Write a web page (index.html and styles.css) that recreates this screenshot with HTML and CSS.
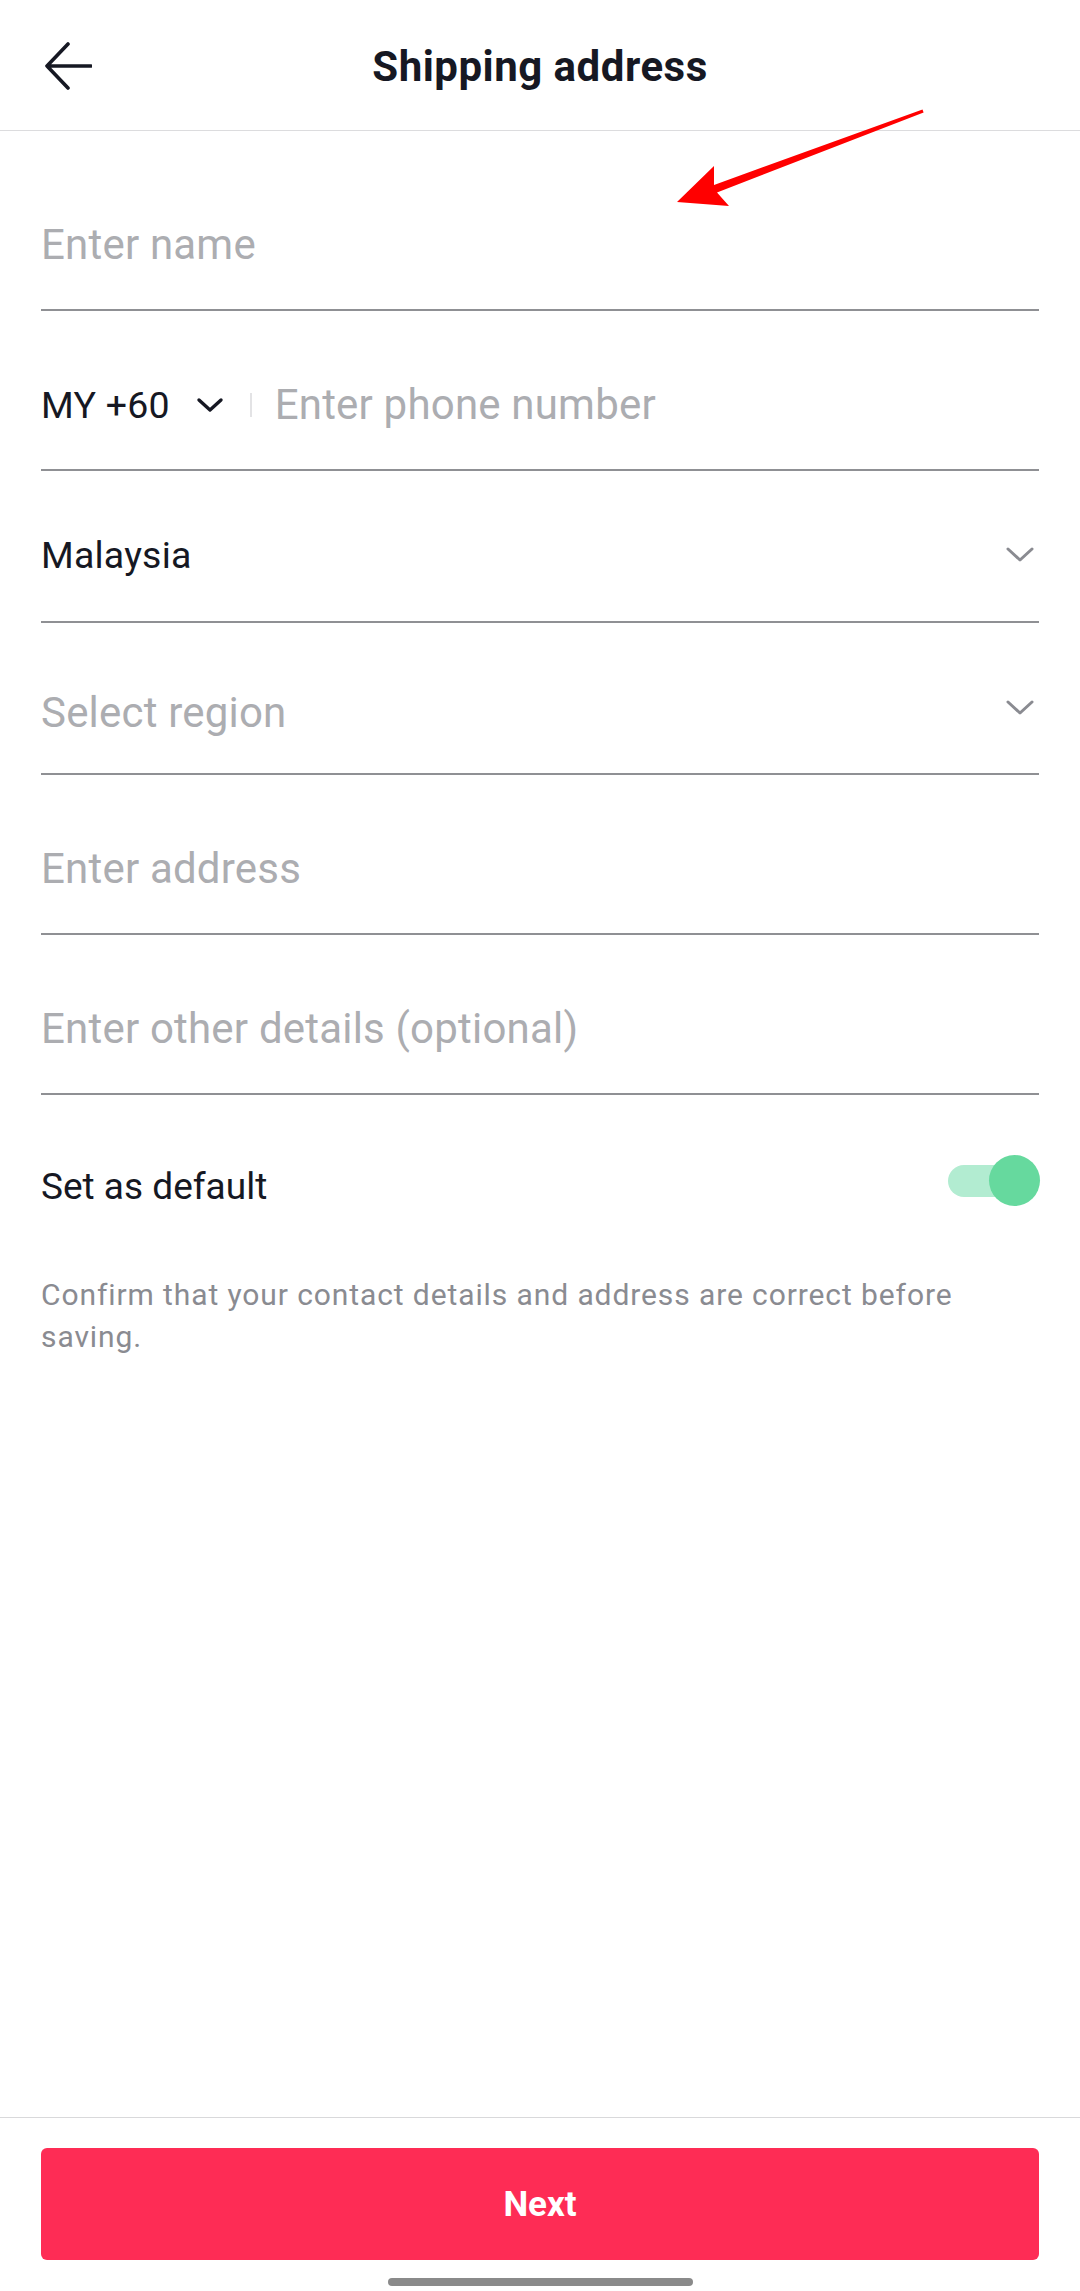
FILE: index.html
```html
<!DOCTYPE html>
<html>
  <head>
    <title>Shipping address</title>
    <meta charset="UTF-8" />
    <link rel="stylesheet" href="styles.css">
  </head>

  <body>
    <div class="page">
      <div class="topBar">
        <button class="back" aria-label="Back">
          <svg width="48" height="48" viewBox="0 0 48 48">
            <path d="M24 2 L3 24 L24 46 M3 24 H47" fill="none" stroke="#161823" stroke-width="3.6" stroke-linecap="round" stroke-linejoin="round"/>
          </svg>
        </button>
        <h1 class="title">Shipping address</h1>
      </div>

      <div class="form">
        <div class="field">
          <p class="placeholder">Enter name</p>
        </div>

        <div class="field">
          <div class="phone">
            <span class="value">MY +60</span>
            <svg class="codeArrow" width="28" height="16" viewBox="0 0 28 16">
              <path d="M3 3 L14 13 L25 3" fill="none" stroke="#161823" stroke-width="3.4" stroke-linecap="round" stroke-linejoin="round"/>
            </svg>
            <span class="divider"></span>
            <span class="placeholder">Enter phone number</span>
          </div>
        </div>

        <div class="field select">
          <span class="value">Malaysia</span>
          <svg class="chevron" width="30" height="18" viewBox="0 0 30 18">
            <path d="M3 3 L15 14 L27 3" fill="none" stroke="#8a8b91" stroke-width="3" stroke-linecap="round" stroke-linejoin="round"/>
          </svg>
        </div>

        <div class="field select region">
          <span class="placeholder">Select region</span>
          <svg class="chevron" width="30" height="18" viewBox="0 0 30 18">
            <path d="M3 3 L15 14 L27 3" fill="none" stroke="#8a8b91" stroke-width="3" stroke-linecap="round" stroke-linejoin="round"/>
          </svg>
        </div>

        <div class="field">
          <p class="placeholder">Enter address</p>
        </div>

        <div class="field">
          <p class="placeholder">Enter other details (optional)</p>
        </div>

        <div class="defaultRow">
          <span class="value">Set as default</span>
          <div class="toggle on">
            <span class="track"></span>
            <span class="knob"></span>
          </div>
        </div>

        <p class="note">Confirm that your contact details and address are correct before saving.</p>
      </div>

      <div class="footer">
        <button class="next">Next</button>
        <div class="homeBar"></div>
      </div>

      <!-- annotation arrow drawn on top of the screenshot -->
      <svg class="pointer" width="1080" height="260" viewBox="0 0 1080 260">
        <polygon points="922.5,109.4 923.6,112.6 717,192.5 729,206 677,202 714,166 714,185" fill="#ff0000"/>
      </svg>
    </div>
  </body>
</html>
```

FILE: styles.css
```css
html * {
  margin: 0;
  padding: 0;
}

body {
  font-family: Roboto, "Liberation Sans", sans-serif;
  background: #fff;
  color: #161823;
}

button {
  background: none;
  border: none;
  outline: none;
  font-family: inherit;
}

.page {
  position: relative;
  width: 1080px;
  height: 2291px;
  display: flex;
  flex-direction: column;
  overflow: hidden;
}

.topBar {
  height: 130px;
  border-bottom: 1px solid #dcdcde;
  display: flex;
  align-items: center;
  justify-content: center;
  position: relative;
}

.back {
  position: absolute;
  left: 44px;
  top: 42px;
  width: 48px;
  height: 48px;
}

.title {
  font-size: 42px;
  font-weight: 700;
  letter-spacing: 0.5px;
  margin-top: 2px;
}

.form {
  flex: 1;
  padding: 20px 41px 0;
}

.field {
  height: 160px;
  border-bottom: 2px solid #8f9094;
  box-sizing: border-box;
  padding-top: 72px;
  font-size: 42px;
  letter-spacing: 0.2px;
  line-height: 44px;
}

.field.select {
  height: 152px;
  padding-top: 62px;
  display: flex;
  align-items: flex-start;
  justify-content: space-between;
}

.field.region {
  padding-top: 68px;
}

.field.region .chevron {
  margin-top: 8px;
}

.placeholder {
  color: #acadb1;
}

.value {
  color: #161823;
  font-size: 37.5px;
}

.phone {
  display: flex;
  align-items: center;
}

.codeArrow {
  margin-left: 26px;
}

.divider {
  width: 2px;
  height: 24px;
  background: #e3e3e5;
  margin: 0 23px 0 26px;
}

.chevron {
  margin-top: 13px;
  margin-right: 4px;
}

.defaultRow {
  display: flex;
  align-items: center;
  justify-content: space-between;
  height: 54px;
  margin-top: 64px;
}

.defaultRow .value {
  font-size: 37px;
}

.toggle {
  position: relative;
  width: 92px;
  height: 52px;
  margin-right: -1px;
  margin-top: -10px;
}

.track {
  position: absolute;
  left: 0;
  top: 10px;
  width: 76px;
  height: 32px;
  border-radius: 16px;
  background: #b2ecd1;
}

.knob {
  position: absolute;
  right: 0;
  top: 0;
  width: 51px;
  height: 51px;
  border-radius: 50%;
  background: #66d99e;
}

.note {
  margin-top: 61px;
  font-size: 30px;
  letter-spacing: 0.9px;
  line-height: 42px;
  color: #8a8b91;
  padding-right: 20px;
}

.footer {
  border-top: 1px solid #d9d9db;
  padding: 30px 41px 5px;
  display: flex;
  flex-direction: column;
  align-items: center;
}

.next {
  width: 100%;
  height: 112px;
  border-radius: 6px;
  background: #fe2c55;
  color: #fff;
  font-size: 35px;
  font-weight: 700;
}

.homeBar {
  width: 305px;
  height: 8px;
  border-radius: 4px;
  background: #8a8a8a;
  margin-top: 18px;
}

.pointer {
  position: absolute;
  left: 0;
  top: 0;
  pointer-events: none;
}
```
